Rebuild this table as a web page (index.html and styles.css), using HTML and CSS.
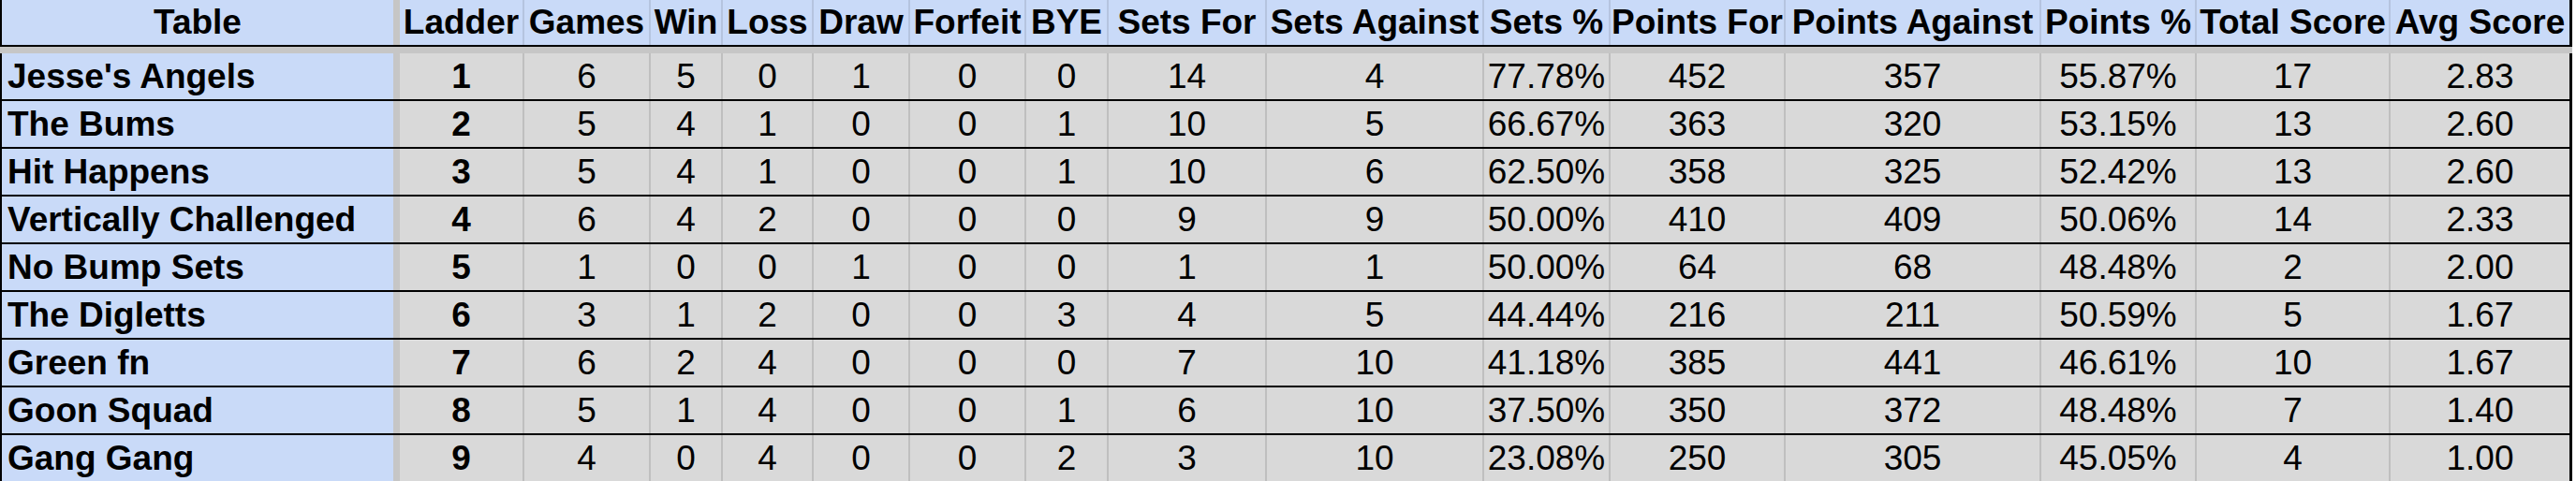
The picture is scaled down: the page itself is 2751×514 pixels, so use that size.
FILE: index.html
```html
<!DOCTYPE html>
<html>
<head>
<meta charset="utf-8">
<title>Ladder Table</title>
<link rel="stylesheet" href="styles.css">
</head>
<body>
<div class="sheet">
  <div class="row head">
    <div class="c name">Table</div>
    <div class="c">Ladder</div>
    <div class="c">Games</div>
    <div class="c">Win</div>
    <div class="c">Loss</div>
    <div class="c">Draw</div>
    <div class="c">Forfeit</div>
    <div class="c">BYE</div>
    <div class="c">Sets For</div>
    <div class="c">Sets Against</div>
    <div class="c">Sets %</div>
    <div class="c">Points For</div>
    <div class="c">Points Against</div>
    <div class="c">Points %</div>
    <div class="c">Total Score</div>
    <div class="c last">Avg Score</div>
  </div>
  <div class="band"></div>

  <div class="row">
    <div class="c name">Jesse's Angels</div><div class="c rank">1</div>
    <div class="c">6</div><div class="c">5</div><div class="c">0</div><div class="c">1</div><div class="c">0</div><div class="c">0</div>
    <div class="c">14</div><div class="c">4</div><div class="c">77.78%</div><div class="c">452</div><div class="c">357</div><div class="c">55.87%</div><div class="c">17</div><div class="c last">2.83</div>
  </div>
  <div class="row">
    <div class="c name">The Bums</div><div class="c rank">2</div>
    <div class="c">5</div><div class="c">4</div><div class="c">1</div><div class="c">0</div><div class="c">0</div><div class="c">1</div>
    <div class="c">10</div><div class="c">5</div><div class="c">66.67%</div><div class="c">363</div><div class="c">320</div><div class="c">53.15%</div><div class="c">13</div><div class="c last">2.60</div>
  </div>
  <div class="row">
    <div class="c name">Hit Happens</div><div class="c rank">3</div>
    <div class="c">5</div><div class="c">4</div><div class="c">1</div><div class="c">0</div><div class="c">0</div><div class="c">1</div>
    <div class="c">10</div><div class="c">6</div><div class="c">62.50%</div><div class="c">358</div><div class="c">325</div><div class="c">52.42%</div><div class="c">13</div><div class="c last">2.60</div>
  </div>
  <div class="row">
    <div class="c name">Vertically Challenged</div><div class="c rank">4</div>
    <div class="c">6</div><div class="c">4</div><div class="c">2</div><div class="c">0</div><div class="c">0</div><div class="c">0</div>
    <div class="c">9</div><div class="c">9</div><div class="c">50.00%</div><div class="c">410</div><div class="c">409</div><div class="c">50.06%</div><div class="c">14</div><div class="c last">2.33</div>
  </div>
  <div class="row">
    <div class="c name">No Bump Sets</div><div class="c rank">5</div>
    <div class="c">1</div><div class="c">0</div><div class="c">0</div><div class="c">1</div><div class="c">0</div><div class="c">0</div>
    <div class="c">1</div><div class="c">1</div><div class="c">50.00%</div><div class="c">64</div><div class="c">68</div><div class="c">48.48%</div><div class="c">2</div><div class="c last">2.00</div>
  </div>
  <div class="row">
    <div class="c name">The Digletts</div><div class="c rank">6</div>
    <div class="c">3</div><div class="c">1</div><div class="c">2</div><div class="c">0</div><div class="c">0</div><div class="c">3</div>
    <div class="c">4</div><div class="c">5</div><div class="c">44.44%</div><div class="c">216</div><div class="c">211</div><div class="c">50.59%</div><div class="c">5</div><div class="c last">1.67</div>
  </div>
  <div class="row">
    <div class="c name">Green fn</div><div class="c rank">7</div>
    <div class="c">6</div><div class="c">2</div><div class="c">4</div><div class="c">0</div><div class="c">0</div><div class="c">0</div>
    <div class="c">7</div><div class="c">10</div><div class="c">41.18%</div><div class="c">385</div><div class="c">441</div><div class="c">46.61%</div><div class="c">10</div><div class="c last">1.67</div>
  </div>
  <div class="row">
    <div class="c name">Goon Squad</div><div class="c rank">8</div>
    <div class="c">5</div><div class="c">1</div><div class="c">4</div><div class="c">0</div><div class="c">0</div><div class="c">1</div>
    <div class="c">6</div><div class="c">10</div><div class="c">37.50%</div><div class="c">350</div><div class="c">372</div><div class="c">48.48%</div><div class="c">7</div><div class="c last">1.40</div>
  </div>
  <div class="row">
    <div class="c name">Gang Gang</div><div class="c rank">9</div>
    <div class="c">4</div><div class="c">0</div><div class="c">4</div><div class="c">0</div><div class="c">0</div><div class="c">2</div>
    <div class="c">3</div><div class="c">10</div><div class="c">23.08%</div><div class="c">250</div><div class="c">305</div><div class="c">45.05%</div><div class="c">4</div><div class="c last">1.00</div>
  </div>
</div>
</body>
</html>
```
FILE: styles.css
```css
html, body {
  margin: 0;
  padding: 0;
  background: #ffffff;
  overflow: hidden;
}

.sheet {
  width: 2747px;
  display: flex;
  flex-direction: column;
  font-family: "Liberation Sans", Arial, sans-serif;
  font-size: 37px;
  color: #000;
}

.row {
  display: grid;
  grid-template-columns: 425px 133px 135px 77px 97px 103px 124px 88px 169px 232px 135px 187px 273px 166px 207px 191px;
  height: 51px;
  box-sizing: border-box;
  border-left: 2px solid #000;
  border-right: 3px solid #000;
  border-bottom: 2px solid #000;
  background: #d9d9d9;
}

.row.head {
  height: 50px;
  background: #c9daf8;
  font-weight: bold;
}

.band {
  height: 7px;
  background: #c6c6c6;
}

.c {
  display: flex;
  align-items: center;
  justify-content: center;
  box-sizing: border-box;
  border-right: 2px solid #bfbfbf;
  white-space: nowrap;
  overflow: hidden;
}

.head .c {
  border-right-color: #b5c4df;
}

.c.last,
.head .c.last {
  border-right: none;
}

.c.name {
  background: #c9daf8;
  border-right: 7px solid #c6c6c6;
  justify-content: flex-start;
  padding-left: 6px;
  font-weight: bold;
}

.head .c.name {
  justify-content: center;
  padding-left: 0;
  border-right-color: #c6c6c6;
}

.c.rank {
  font-weight: bold;
}
```
